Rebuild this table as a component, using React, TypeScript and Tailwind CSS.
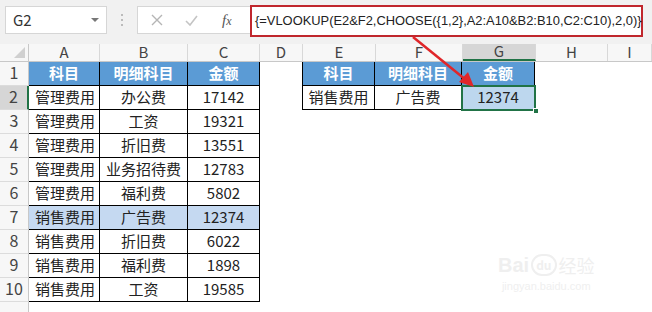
import React from "react";

const COLS = [
  { key: "A", w: 71 },
  { key: "B", w: 88 },
  { key: "C", w: 72 },
  { key: "D", w: 43 },
  { key: "E", w: 73 },
  { key: "F", w: 87 },
  { key: "G", w: 73 },
  { key: "H", w: 72 },
  { key: "I", w: 44 },
];

const LEFT_DATA: [string, string, string][] = [
  ["管理费用", "办公费", "17142"],
  ["管理费用", "工资", "19321"],
  ["管理费用", "折旧费", "13551"],
  ["管理费用", "业务招待费", "12783"],
  ["管理费用", "福利费", "5802"],
  ["销售费用", "广告费", "12374"],
  ["销售费用", "折旧费", "6022"],
  ["销售费用", "福利费", "1898"],
  ["销售费用", "工资", "19585"],
];

const font = "font-['Microsoft_YaHei','Noto_Sans_CJK_SC',sans-serif]";

type CellProps = {
  w: number;
  children?: React.ReactNode;
  className?: string;
};

const Cell = ({ w, children, className = "" }: CellProps) => (
  <div
    className={`h-full shrink-0 flex items-center ${className}`}
    style={{ width: w }}
  >
    {children}
  </div>
);

const FormulaBar = () => (
  <div className="h-[44px] bg-[#f1f1f1] relative">
    {/* name box */}
    <div className="absolute left-[5px] top-[6px] w-[102px] h-[28px] bg-white border border-[#d6d6d6] flex items-center pl-[7px]">
      <span className="text-[15px] text-[#333]">G2</span>
      <span className="ml-auto mr-[7px] w-0 h-0 border-l-[4px] border-r-[4px] border-t-[4px] border-l-transparent border-r-transparent border-t-[#777]" />
    </div>
    {/* splitter dots */}
    <div className="absolute left-[121px] top-[14px] flex flex-col gap-[3px]">
      <span className="w-[2px] h-[2px] bg-[#bbb]" />
      <span className="w-[2px] h-[2px] bg-[#bbb]" />
      <span className="w-[2px] h-[2px] bg-[#bbb]" />
    </div>
    {/* cancel / enter / fx */}
    <div className="absolute left-[137px] top-[6px] w-[113px] h-[28px] bg-white border border-[#d6d6d6] border-r-0 flex items-center">
      <svg width="12" height="12" viewBox="0 0 12 12" className="ml-[13px]">
        <path d="M1 1L11 11M11 1L1 11" stroke="#b5b5b5" strokeWidth="1.4" />
      </svg>
      <svg width="13" height="11" viewBox="0 0 13 11" className="ml-[22px]">
        <path d="M1 6L5 10L12 1" stroke="#c4c4c4" strokeWidth="1.6" fill="none" />
      </svg>
      <span className="ml-[24px] text-[15px] italic text-[#555] font-['Liberation_Serif',serif]">
        f<span className="text-[12px]">x</span>
      </span>
    </div>
    {/* formula box */}
    <div className="absolute left-[250px] top-[5px] w-[393px] h-[32px] bg-white border-2 border-[#c0272d] flex items-center pl-[3px]">
      <span className="text-[12.9px] text-[#222] whitespace-nowrap font-['Liberation_Sans',sans-serif]">
        {"{=VLOOKUP(E2&F2,CHOOSE({1,2},A2:A10&B2:B10,C2:C10),2,0)}"}
      </span>
    </div>
  </div>
);

const ColumnHeader = () => (
  <div className="flex h-[18px] border-b border-[#c8c8c8] bg-[#f7f7f7]">
    <div className="w-[29px] shrink-0 h-full border-r border-[#c8c8c8] relative">
      <span className="absolute right-[3px] bottom-[3px] w-0 h-0 [border-bottom:11px_solid_#d0d0d0] [border-left:11px_solid_transparent]" />
    </div>
    {COLS.map((c) => (
      <Cell
        key={c.key}
        w={c.w}
        className={`justify-center border-r border-[#d8d8d8] text-[15px] text-[#444] ${
          c.key === "G" ? "bg-[#d6d6d6] border-b-2 border-b-[#217346]" : ""
        }`}
      >
        {c.key}
      </Cell>
    ))}
  </div>
);

const RowNum = ({ n, active }: { n: number; active?: boolean }) => (
  <div
    className={`w-[29px] shrink-0 h-full flex items-end justify-center pb-[1px] text-[16px] text-[#444] border-b border-[#dcdcdc] ${
      active ? "bg-[#d6d6d6] border-r-2 border-r-[#217346]" : "bg-[#f7f7f7] border-r border-r-[#c8c8c8]"
    }`}
  >
    {n}
  </div>
);

const Watermark = () => (
  <div className="absolute left-[498px] top-[250px] flex flex-col items-center text-[#efefef] pointer-events-none select-none">
    <div className="flex items-center gap-[2px]">
      <span className="text-[20px] font-bold font-['Liberation_Sans',sans-serif]">Bai</span>
      <span className="text-[12px] rounded-full border-2 border-[#efefef] px-[3px] font-bold">du</span>
      <span className="text-[18px]">经验</span>
    </div>
    <span className="text-[11px] font-['Liberation_Sans',sans-serif] -mt-[2px]">jingyan.baidu.com</span>
  </div>
);

export default function App() {
  const widths = COLS.map((c) => c.w);
  const [wA, wB, wC, wD, wE, wF, wG, wH, wI] = widths;

  return (
    <div className={`w-[652px] h-[312px] overflow-hidden bg-white relative ${font}`}>
      <FormulaBar />
      <ColumnHeader />

      {/* row 1: headers of both tables */}
      <div className="flex h-[24px]">
        <RowNum n={1} />
        <Cell w={wA} className="justify-center bg-[#5b9bd5] text-white font-bold text-[15px] border-r border-b border-black">科目</Cell>
        <Cell w={wB} className="justify-center bg-[#5b9bd5] text-white font-bold text-[15px] border-r border-b border-black">明细科目</Cell>
        <Cell w={wC} className="justify-center bg-[#5b9bd5] text-white font-bold text-[15px] border-r border-b border-black">金额</Cell>
        <Cell w={wD} />
        <Cell w={wE} className="justify-center bg-[#5b9bd5] text-white font-bold text-[15px] border-l border-r border-b border-black -ml-px">科目</Cell>
        <Cell w={wF} className="justify-center bg-[#5b9bd5] text-white font-bold text-[15px] border-r border-b border-black">明细科目</Cell>
        <Cell w={wG} className="justify-center bg-[#5b9bd5] text-white font-bold text-[15px] border-r border-b border-black">金额</Cell>
        <Cell w={wH} />
        <Cell w={wI} />
      </div>

      {LEFT_DATA.map((row, i) => {
        const n = i + 2;
        const hl = n === 7 ? "bg-[#c5d9f1]" : "";
        return (
          <div key={n} className="flex h-[24px] text-[15px] text-[#222]">
            <RowNum n={n} active={n === 2} />
            <Cell w={wA} className={`pl-[6px] border-r border-b border-black ${hl}`}>{row[0]}</Cell>
            <Cell w={wB} className={`justify-center border-r border-b border-black ${hl}`}>{row[1]}</Cell>
            <Cell w={wC} className={`justify-center border-r border-b border-black ${hl}`}>{row[2]}</Cell>
            <Cell w={wD} />
            {n === 2 ? (
              <>
                <Cell w={wE} className="justify-center border-l border-r border-b border-black -ml-px">销售费用</Cell>
                <Cell w={wF} className="justify-center border-r border-b border-black">广告费</Cell>
                <div className="relative shrink-0 h-full" style={{ width: wG }}>
                  <div className="h-full flex items-center justify-center bg-[#bdd7ee] border-r border-b border-black">12374</div>
                  <div className="absolute -left-[1px] -top-[1px] -right-[1px] -bottom-[1px] border-2 border-[#217346]" />
                  <div className="absolute -right-[4px] -bottom-[4px] w-[6px] h-[6px] bg-[#217346] border border-white" />
                </div>
              </>
            ) : (
              <>
                <Cell w={wE} />
                <Cell w={wF} />
                <Cell w={wG} />
              </>
            )}
            <Cell w={wH} />
            <Cell w={wI} />
          </div>
        );
      })}

      <div className="flex h-[10px]">
        <div className="w-[29px] shrink-0 h-full bg-[#f7f7f7] border-r border-[#c8c8c8]" />
      </div>

      <Watermark />

      {/* red pointer from the formula to G2 */}
      <svg className="absolute left-0 top-0 pointer-events-none" width="652" height="312">
        <line x1="413" y1="37" x2="466" y2="80" stroke="#e0262a" strokeWidth="2.5" />
        <polygon points="474,87 459,82 468,72" fill="#e0262a" />
      </svg>
    </div>
  );
}
